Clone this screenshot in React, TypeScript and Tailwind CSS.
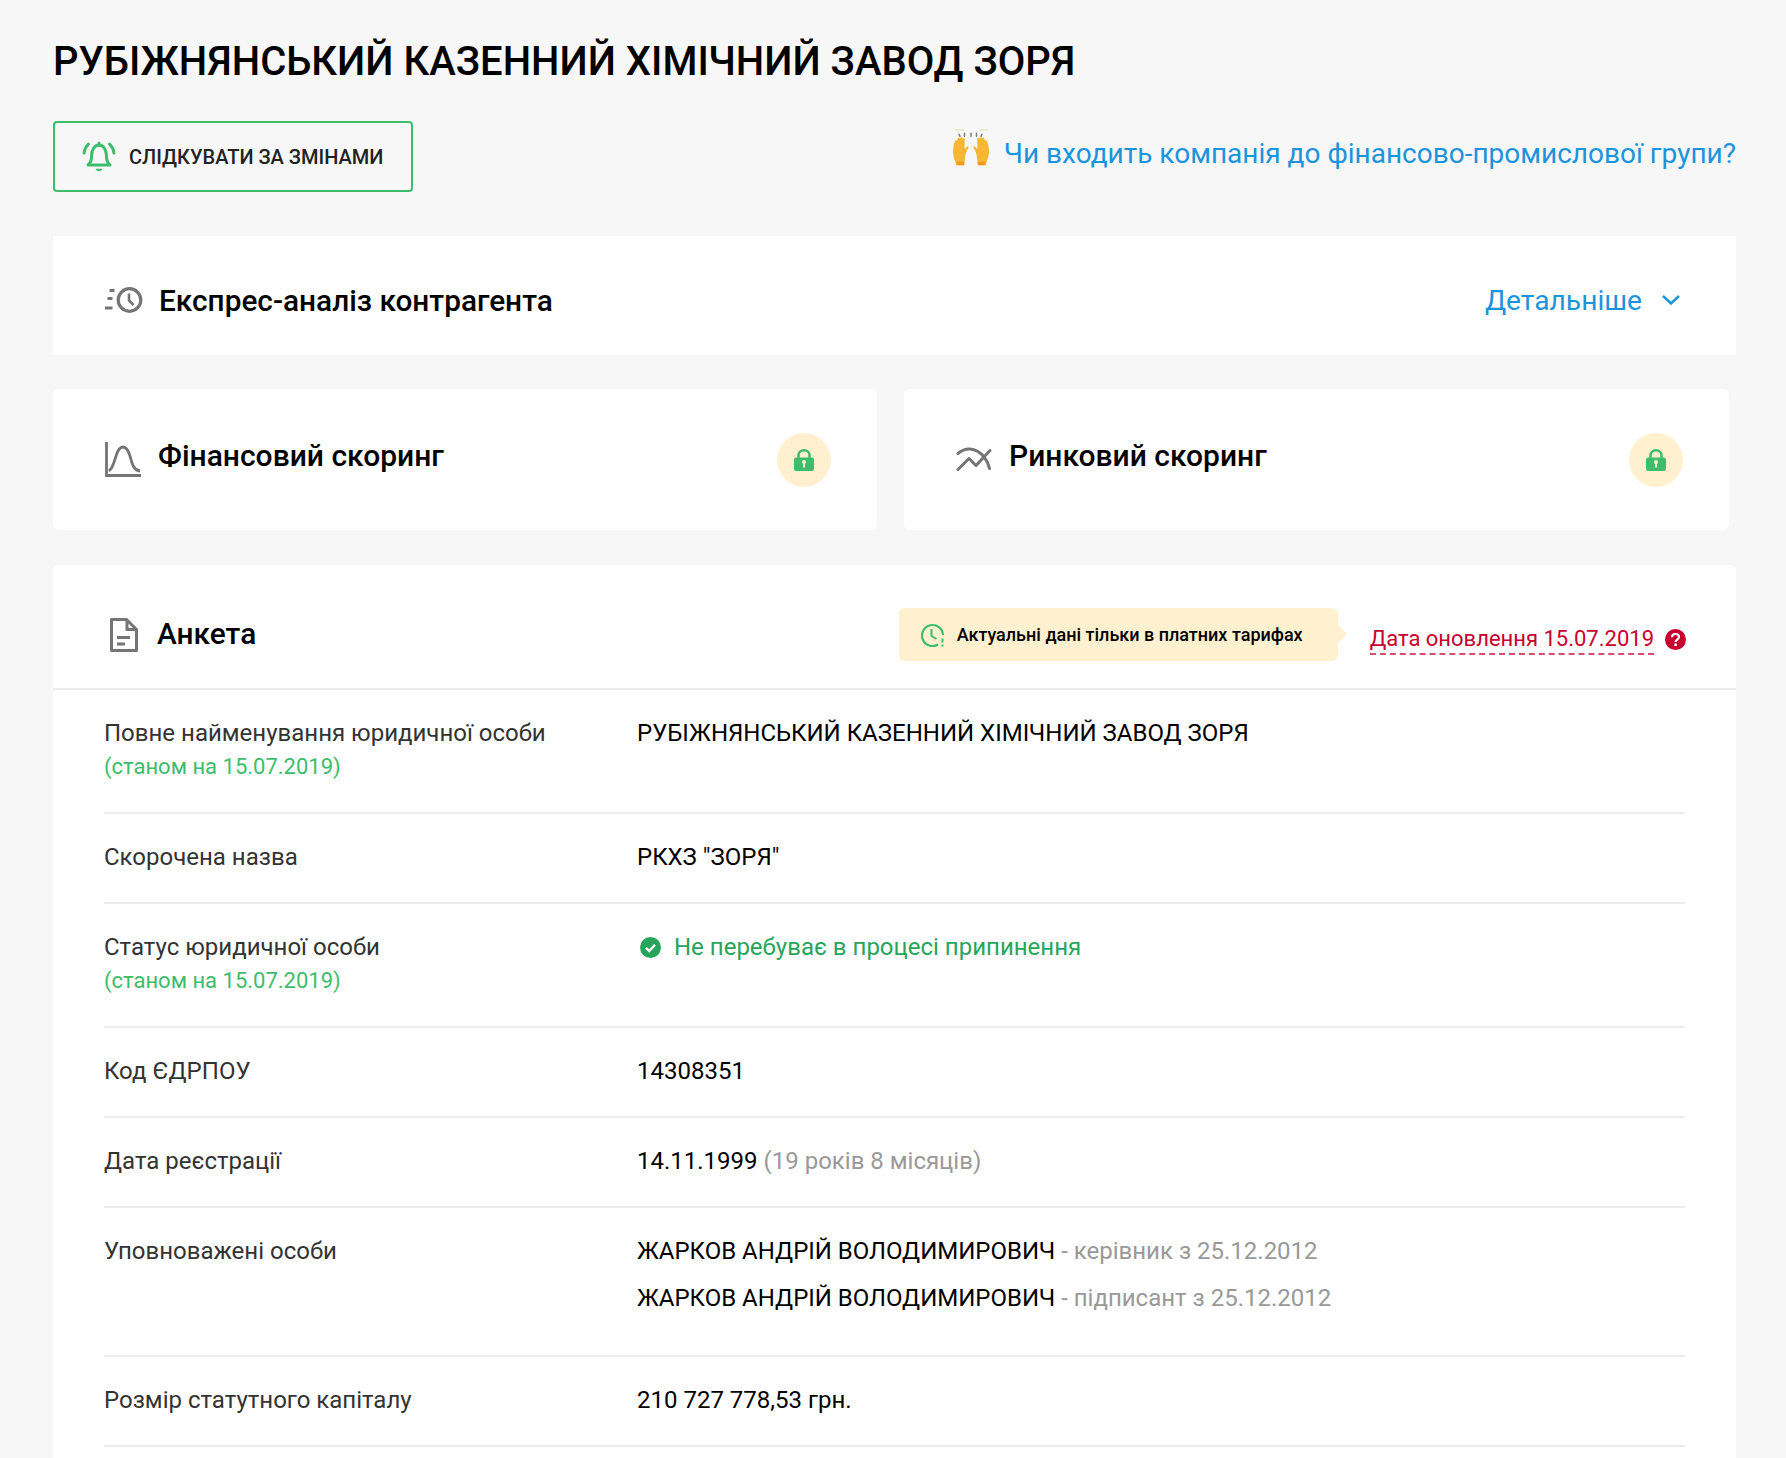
import type { ReactNode } from 'react';

const iconGray = '#757575';

function BellIcon() {
  return (
    <svg width="34" height="31" viewBox="0 0 34 31" fill="none" stroke="#3dbd6c" strokeWidth="3" strokeLinecap="round" strokeLinejoin="round">
      <path d="M6 24c2.500-2 3.500-4 3.500-8.500C9.500 9 12.500 4 17 4s7.500 5 7.500 11.500c0 4.500 1 6.500 3.500 8.500z" />
      <path d="M17 2v2" />
      <path d="M14.500 28.500h5l-2.500 1z" fill="#3dbd6c" strokeWidth="1.500" />
      <path d="M6.500 3C4 5.500 2.500 8 2 12" />
      <path d="M27.500 3c2.500 2.500 4 5 4.500 9" />
    </svg>
  );
}

function HandsIcon() {
  return (
    <svg width="38" height="40" viewBox="0 0 38 38" preserveAspectRatio="none">
      <path d="M3 1h9M27 1h9" stroke="#e8d9b0" strokeWidth="1" />
      <g stroke="#7c7c7c" strokeWidth="1.500" strokeLinecap="round">
        <path d="M7 5l1 2M12.500 4v3M19 4v3M24.500 4v3M30 5l-1 2" />
      </g>
      <path d="M1 22c0-5 1-8 2-10.500.4-1 1.500-1 1.800.2.600-2 .9-2.800 1.600-3.400.7-.5 1.300 0 1.500.8.300-.9.800-1.300 1.500-1.300.8 0 1.200.7 1.200 1.400.7-.6 1.400-.6 1.900-.1.600.7.300 1.700.2 3-.1 2.500-.2 5.500.2 7 1-1.500 2-2.500 3-2.800.9 0 1 .9.500 1.800-1.500 2.500-2.500 4-3 7-.4 2.500-1 5.400-1 9.400H4c0-4.500-3-7-3-12.500z" fill="#f7b733" />
      <path d="M37 22c0-5-1-8-2-10.500-.4-1-1.500-1-1.800.2-.6-2-.9-2.800-1.600-3.400-.7-.5-1.300 0-1.500.8-.3-.9-.8-1.300-1.500-1.300-.8 0-1.200.7-1.200 1.400-.7-.6-1.400-.6-1.900-.1-.6.7-.3 1.700-.2 3 .1 2.500.2 5.500-.2 7-1-1.500-2-2.500-3-2.800-.9 0-1 .9-.5 1.800 1.500 2.500 2.500 4 3 7 .4 2.500 1 5.400 1 9.400H34c0-4.500 3-7 3-12.500z" fill="#f7b733" />
      <path d="M4.500 31h7.600l-.1 3.500H5.500zM33.500 31h-7.600l.1 3.500h6.500z" fill="#ec9a24" />
    </svg>
  );
}

function SpeedClockIcon() {
  return (
    <svg width="38" height="26" viewBox="0 0 38 26" fill="none" stroke={iconGray} strokeWidth="3.200">
      <circle cx="24.500" cy="13" r="11.300" />
      <path d="M24 6.500v7l4.500 4.500" strokeWidth="2.600" />
      <path d="M4.500 3.500h5M2.500 11.500h5M0 21h7.500" strokeWidth="2.800" />
    </svg>
  );
}

function ChartIcon() {
  return (
    <svg width="36" height="35" viewBox="0 0 36 35" fill="none" stroke={iconGray} strokeWidth="2.800">
      <path d="M1.500 0v33.500H36" />
      <path d="M4 29c4-3 5-9 7-15 1.500-5 4-9 7-9s5.500 4 7 9c2 7 3 14 10 15" />
    </svg>
  );
}

function TrendIcon() {
  return (
    <svg width="36" height="25" viewBox="0 0 36 25" fill="none" stroke={iconGray} strokeWidth="3" strokeLinecap="round" strokeLinejoin="round">
      <path d="M2 22.500l11-11 7 7L34 3.500" />
      <path d="M2 6.500C6 3 10 1.800 14 2c5 .3 10 3 14 8 2.500 3 4.500 7 5.500 11.500" />
    </svg>
  );
}

function DocIcon() {
  return (
    <svg width="28" height="34" viewBox="0 0 28 34" fill="none" stroke={iconGray} strokeWidth="3">
      <path d="M1.500 1.500h15l10 10v21h-25z" strokeLinejoin="round" />
      <path d="M17 2v9.500h9.500" />
      <path d="M7 19.500h13M7 26h8" />
    </svg>
  );
}

function LockBadge() {
  return (
    <div className="flex h-[54px] w-[54px] items-center justify-center rounded-full bg-[#fff0d0]">
      <svg width="20" height="22" viewBox="0 0 20 22">
        <path d="M4.500 9.500V6.500C4.500 3.200 7 1.300 10 1.300s5.500 1.900 5.500 5.200v3" fill="none" stroke="#3dbd6c" strokeWidth="2.500" />
        <rect x="0" y="8.500" width="20" height="13.500" rx="2" fill="#3dbd6c" />
        <circle cx="10" cy="13" r="2" fill="#fff0d0" />
        <rect x="9" y="13.500" width="2" height="5" fill="#fff0d0" />
      </svg>
    </div>
  );
}

function SmallClockIcon() {
  return (
    <svg width="24" height="24" viewBox="0 0 24 24" fill="none" stroke="#3dbd6c" strokeWidth="2.200">
      <path d="M17 21.500A10.500 10.500 0 1 1 22 12" />
      <path d="M10.500 6v7l5 3" strokeWidth="2" />
      <path d="M21.500 15.500v4M21.500 21.500v2" strokeWidth="2" />
    </svg>
  );
}

function CheckIcon() {
  return (
    <svg width="21" height="21" viewBox="0 0 21 21">
      <circle cx="10.500" cy="10.500" r="10.500" fill="#27a55a" />
      <path d="M6 10.800l3.200 3.200L15 7.800" fill="none" stroke="#fff" strokeWidth="2.400" />
    </svg>
  );
}

function QuestionIcon() {
  return (
    <svg width="21" height="21" viewBox="0 0 21 21">
      <circle cx="10.500" cy="10.500" r="10.500" fill="#c8002d" />
      <path d="M7 8.200c0-2 1.500-3.200 3.500-3.200s3.500 1.200 3.500 3c0 2.600-3.400 2.600-3.400 5" fill="none" stroke="#fff" strokeWidth="2.200" />
      <rect x="9.300" y="14.500" width="2.500" height="2.500" fill="#fff" />
    </svg>
  );
}

function ChevronIcon() {
  return (
    <svg width="18" height="10" viewBox="0 0 18 10" fill="none" stroke="#1c94dc" strokeWidth="2.400">
      <path d="M1 1l8 7.500L17 1" />
    </svg>
  );
}

function ScoreCard({ icon, title, className }: { icon: ReactNode; title: string; className: string }) {
  return (
    <div className={`flex h-[141px] items-center justify-between rounded-md bg-white pl-[52px] pr-[46px] ${className}`}>
      <div className="flex w-[500px] items-center">
        <div className="flex w-[53px] shrink-0 items-center">{icon}</div>
        <span className="-translate-y-[4px] text-[30px] font-medium text-black">{title}</span>
      </div>
      <LockBadge />
    </div>
  );
}

function Row({ label, since, className, children }: { label: string; since?: boolean; className?: string; children: ReactNode }) {
  return (
    <div className={`flex border-b-2 border-[#ececec] pt-[26px] ${className ?? 'pb-[28px]'}`}>
      <div className="w-[533px] shrink-0 text-[#333333]">
        <div>{label}</div>
        {since && <div className="text-[22px] text-[#3dbd6c]">(станом на 15.07.2019)</div>}
      </div>
      <div className="text-black">{children}</div>
    </div>
  );
}

export default function App() {
  return (
    <div className="h-[1458px] overflow-hidden bg-[#f7f7f7] pl-[53px] pr-[50px] pt-[36px] font-['Roboto',sans-serif]">
      <h1 className="text-[40px] font-medium leading-[52px] text-black">РУБІЖНЯНСЬКИЙ КАЗЕННИЙ ХІМІЧНИЙ ЗАВОД ЗОРЯ</h1>

      <div className="mt-[33px] flex items-start justify-between">
        <button className="flex h-[71px] w-[360px] items-center gap-[13px] rounded border-2 border-[#3dbd6c] pl-[27px] text-[20px] font-medium text-[#222222]">
          <BellIcon />
          СЛІДКУВАТИ ЗА ЗМІНАМИ
        </button>
        <a className="flex items-start gap-[14px] pt-[8px] text-[28px] text-[#1c94dc]">
          <HandsIcon />
          <span className="pt-[6px] leading-[38px]">Чи входить компанія до фінансово-промислової групи?</span>
        </a>
      </div>

      <div className="mt-[44px] flex h-[119px] items-center justify-between bg-white pl-[52px] pr-[56px]">
        <div className="flex items-center gap-[16px] pt-[8px]">
          <SpeedClockIcon />
          <span className="translate-y-[2px] text-[29.8px] font-medium text-black">Експрес-аналіз контрагента</span>
        </div>
        <a className="flex items-center gap-[20px] pt-[10px] text-[28.2px] text-[#1c94dc]">
          <span className="translate-y-[1px]">Детальніше</span>
          <ChevronIcon />
        </a>
      </div>

      <div className="mt-[34px] flex gap-[27px]">
        <ScoreCard icon={<ChartIcon />} title="Фінансовий скоринг" className="w-[824px]" />
        <ScoreCard icon={<TrendIcon />} title="Ринковий скоринг" className="w-[825px]" />
      </div>

      <div className="mt-[35px] h-[900px] rounded-t-md bg-white">
        <div className="flex h-[125px] items-center justify-between border-b-2 border-[#ececec] pl-[57px] pr-[50px]">
          <div className="flex items-center gap-[19px] pt-[16px]">
            <DocIcon />
            <span className="text-[29.8px] font-medium text-black">Анкета</span>
          </div>
          <div className="flex items-center pt-[16px]">
            <div className="relative flex h-[53px] w-[439px] items-center gap-[12px] rounded-md bg-[#fff0d0] pl-[22px] text-[18px] font-medium text-black">
              <SmallClockIcon />
              Актуальні дані тільки в платних тарифах
              <div className="absolute right-[-9px] top-[17px] h-0 w-0 border-y-[9px] border-l-[9px] border-y-transparent border-l-[#fff0d0]" />
            </div>
            <div className="ml-[32px] flex items-center gap-[11px] pt-[9px] text-[22px] text-[#c8002d]">
              <span className="translate-y-[-1px] border-b-2 border-dashed border-[#c8002d]/70 pt-[2px] leading-[29px]">Дата оновлення 15.07.2019</span>
              <QuestionIcon />
            </div>
          </div>
        </div>

        <div className="mx-[51px] text-[24px] leading-[34px]">
          <Row label="Повне найменування юридичної особи" since>РУБІЖНЯНСЬКИЙ КАЗЕННИЙ ХІМІЧНИЙ ЗАВОД ЗОРЯ</Row>
          <Row label="Скорочена назва">РКХЗ "ЗОРЯ"</Row>
          <Row label="Статус юридичної особи" since>
            <div className="flex items-center gap-[13px] pl-[3px] text-[#27a55a]">
              <CheckIcon />
              Не перебуває в процесі припинення
            </div>
          </Row>
          <Row label="Код ЄДРПОУ">14308351</Row>
          <Row label="Дата реєстрації">
            14.11.1999 <span className="text-[#999999]">(19 років 8 місяців)</span>
          </Row>
          <Row label="Уповноважені особи" className="pb-[40px]">
            <div>
              ЖАРКОВ АНДРІЙ ВОЛОДИМИРОВИЧ <span className="text-[#999999]">- керівник з 25.12.2012</span>
            </div>
            <div className="mt-[13px]">
              ЖАРКОВ АНДРІЙ ВОЛОДИМИРОВИЧ <span className="text-[#999999]">- підписант з 25.12.2012</span>
            </div>
          </Row>
          <Row label="Розмір статутного капіталу">210 727 778,53 грн.</Row>
        </div>
      </div>
    </div>
  );
}
